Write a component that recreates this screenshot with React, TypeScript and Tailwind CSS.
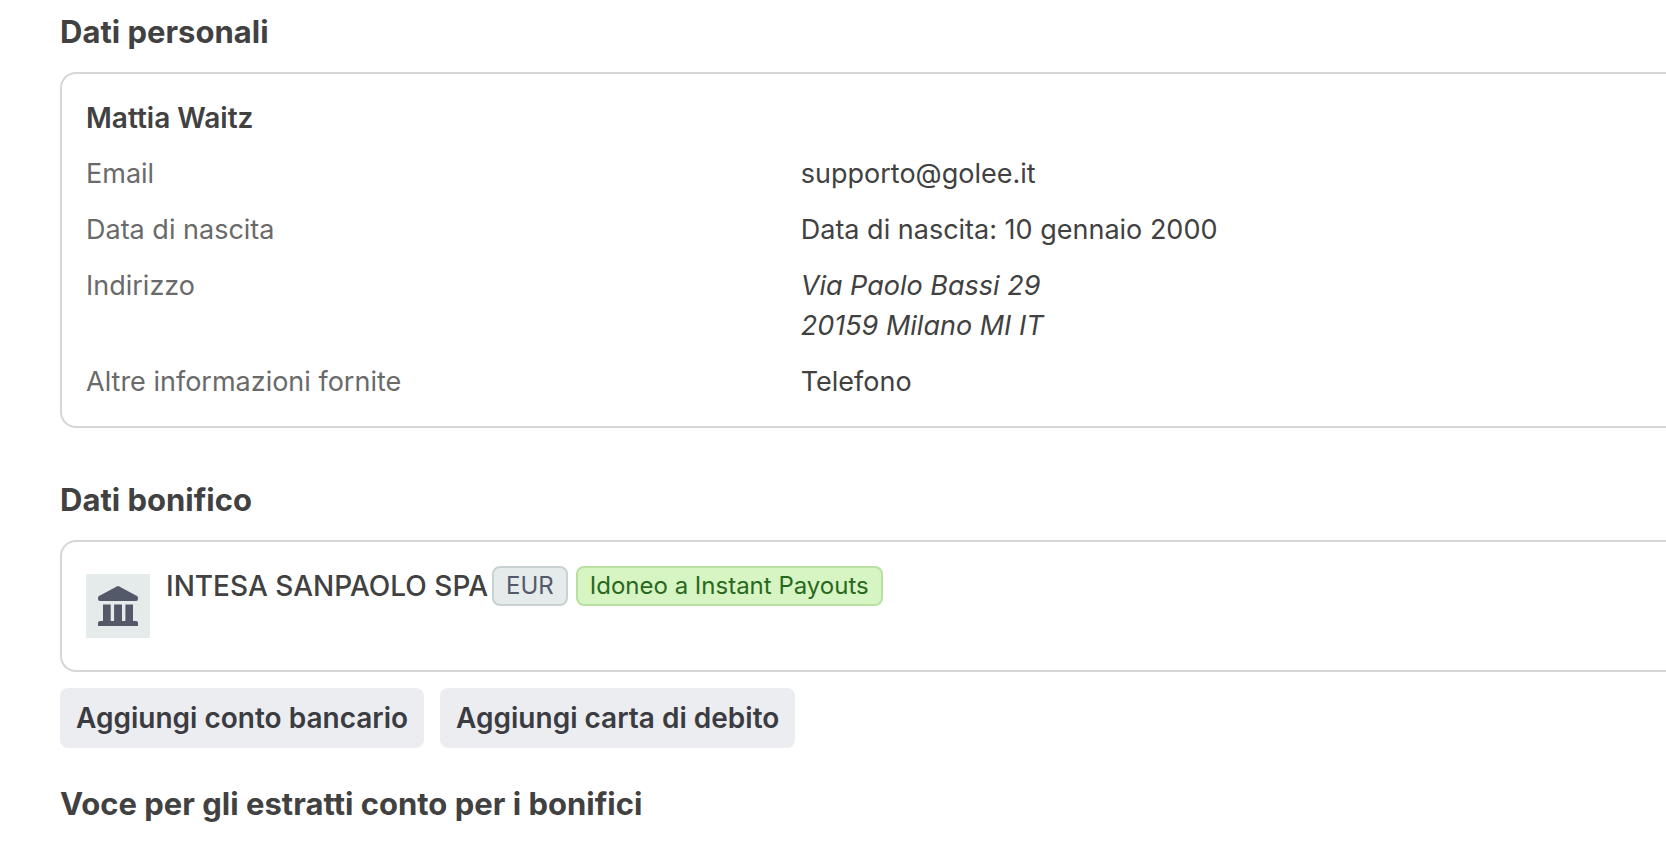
import type { ReactNode } from "react"

const DETAILS = [
  { label: "Email", value: "supporto@golee.it" },
  { label: "Data di nascita", value: "Data di nascita: 10 gennaio 2000" },
  {
    label: "Indirizzo",
    value: (
      <address>
        Via Paolo Bassi 29
        <br />
        20159 Milano MI IT
      </address>
    ),
  },
  { label: "Altre informazioni fornite", value: "Telefono" },
]

const ACTIONS = ["Aggiungi conto bancario", "Aggiungi carta di debito"]

function Title({ children }: { children: ReactNode }) {
  return <h2 className="text-[31px] font-bold leading-10">{children}</h2>
}

function Card({ children }: { children: ReactNode }) {
  return (
    <div className="mt-5 rounded-l-2xl border-2 border-r-0 border-[#d6d6d6] py-6 pl-6">
      {children}
    </div>
  )
}

function BankIcon() {
  return (
    <div className="flex size-16 shrink-0 items-center justify-center bg-[#e5ebeb] text-[#545969]">
      <svg width="40" height="40" viewBox="0 0 40 40" fill="currentColor" aria-hidden="true">
        <path d="M18.8 .4a2.6 2.6 0 0 1 2.4 0L39 9.9a2 2 0 0 1 1 1.7V13a2 2 0 0 1-2 2H2a2 2 0 0 1-2-2v-1.400a2 2 0 0 1 1-1.700z" />
        <path d="M5 18.500h7.700V35H5zM16.100 18.500h7.900V35h-7.900zM27.400 18.500h7.600V35h-7.600z" />
        <path d="M2 35h36a2 2 0 0 1 2 2v3H0v-3a2 2 0 0 1 2-2z" />
      </svg>
    </div>
  )
}

export default function App() {
  return (
    <main className="min-h-screen overflow-hidden bg-white pt-3 pb-4 pl-[60px] font-['Inter',sans-serif] text-[27px] leading-10 text-[#414141]">
      {/* ── Dati personali ── */}
      <section>
        <Title>Dati personali</Title>
        <Card>
          <h3 className="text-[28px] font-semibold leading-10">Mattia Waitz</h3>
          <dl className="mt-4 flex flex-col gap-4">
            {DETAILS.map(({ label, value }) => (
              <div key={label} className="grid grid-cols-[19fr_23fr]">
                <dt className="text-[#6a6a6a]">{label}</dt>
                <dd>{value}</dd>
              </div>
            ))}
          </dl>
        </Card>
      </section>

      {/* ── Dati bonifico ── */}
      <section className="mt-[52px]">
        <Title>Dati bonifico</Title>
        <Card>
          <div className="flex min-h-20 items-center gap-4">
            <BankIcon />
            <div className="flex items-center gap-1 self-start">
              <span className="text-[28px] font-medium leading-10">INTESA SANPAOLO SPA</span>
              <div className="flex gap-2 text-2xl leading-9">
                <span className="rounded-lg border-2 border-[#c8d2d3] bg-[#e5ebeb] px-3 text-[#545969]">
                  EUR
                </span>
                <span className="rounded-lg border-2 border-[#b8e0a2] bg-[#d7f4c3] px-3 text-[#27691c]">
                  Idoneo a Instant Payouts
                </span>
              </div>
            </div>
          </div>
        </Card>
        <div className="mt-4 flex gap-4">
          {ACTIONS.map((label) => (
            <button
              key={label}
              type="button"
              className="h-[60px] rounded-lg bg-[#ecedf1] px-4 text-[28px] font-semibold text-[#3b3c42] hover:bg-[#e2e3e9]"
            >
              {label}
            </button>
          ))}
        </div>
      </section>

      <section className="mt-9">
        <Title>Voce per gli estratti conto per i bonifici</Title>
      </section>
    </main>
  )
}
